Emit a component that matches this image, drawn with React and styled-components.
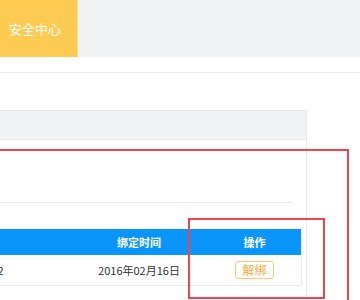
import React from "react";
import styled, { createGlobalStyle } from "styled-components";

const Global = createGlobalStyle`
  html, body { margin: 0; padding: 0; background: #fff; overflow: hidden; }
  body { font-family: "Noto Sans CJK SC", "Noto Sans", "Liberation Sans", sans-serif; }
  #root { width: 360px; height: 300px; overflow: hidden; position: relative; }
`;

const TopBar = styled.div`
  height: 57px;
  background: #f2f3f5;
  display: flex;
`;

const Tab = styled.div`
  width: 78px;
  box-sizing: border-box;
  padding-left: 9px;
  background: #fecb52;
  border-right: 1px solid #fbd98a;
  color: #fff;
  font-size: 13px;
  display: flex;
  align-items: center;
`;

const SubBar = styled.div`
  height: 15px;
  border-bottom: 1px solid #ececee;
`;

const Content = styled.div`
  padding-top: 37px;
`;

const Panel = styled.div`
  width: 307px;
  box-sizing: border-box;
  border-top: 1px solid #e9eaec;
  border-right: 1px solid #e9eaec;
  height: 200px;
`;

const PanelHeader = styled.div`
  height: 28px;
  background: #f2f3f5;
  border-bottom: 1px solid #e6e7e9;
`;

const PanelBody = styled.div`
  padding-right: 4px;
`;

const Divider = styled.div`
  height: 62px;
  margin-right: 10px;
  border-bottom: 1px solid #e8e8e8;
  margin-bottom: 26px;
`;

const Table = styled.div`
  margin-left: -126px;
  width: 428px;
  box-sizing: border-box;
  border-right: 1px solid #ececec;
  font-size: 11px;
`;

const Row = styled.div`
  display: grid;
  grid-template-columns: 196px 138px 1fr;
  height: ${(p) => (p.$head ? "26px" : "30px")};
  background: ${(p) => (p.$head ? "#0a95fb" : "#fff")};
  color: ${(p) => (p.$head ? "#fff" : "#333")};
  font-weight: ${(p) => (p.$head ? 700 : 400)};
  border-bottom: ${(p) => (p.$head ? "none" : "1px solid #e8e8e8")};
`;

const Cell = styled.div`
  display: flex;
  align-items: center;
  justify-content: center;
`;

const Btn = styled.button`
  width: 39px;
  height: 18px;
  padding: 0;
  box-sizing: border-box;
  border: 1px solid #fbc778;
  border-radius: 3px;
  background: #fff;
  color: #f7a93a;
  font-family: inherit;
  font-size: 12px;
  line-height: 16px;
`;

const Mark = styled.div`
  position: absolute;
  border: 2px solid #f0444a;
  box-sizing: border-box;
  pointer-events: none;
  left: ${(p) => p.$l}px;
  top: ${(p) => p.$t}px;
  width: ${(p) => p.$w}px;
  height: ${(p) => p.$h}px;
`;

export default function App() {
  return (
    <>
      <Global />
      <TopBar>
        <Tab>安全中心</Tab>
      </TopBar>
      <SubBar />
      <Content>
        <Panel>
          <PanelHeader />
          <PanelBody>
            <Divider />
            <Table>
              <Row $head>
                <Cell>账号</Cell>
                <Cell>绑定时间</Cell>
                <Cell>操作</Cell>
              </Row>
              <Row>
                <Cell>186****5632</Cell>
                <Cell>2016年02月16日</Cell>
                <Cell>
                  <Btn>解绑</Btn>
                </Cell>
              </Row>
            </Table>
          </PanelBody>
        </Panel>
      </Content>
      <Mark $l={-10} $t={149} $w={359} $h={200} />
      <Mark $l={188} $t={218} $w={137} $h={81} />
    </>
  );
}
